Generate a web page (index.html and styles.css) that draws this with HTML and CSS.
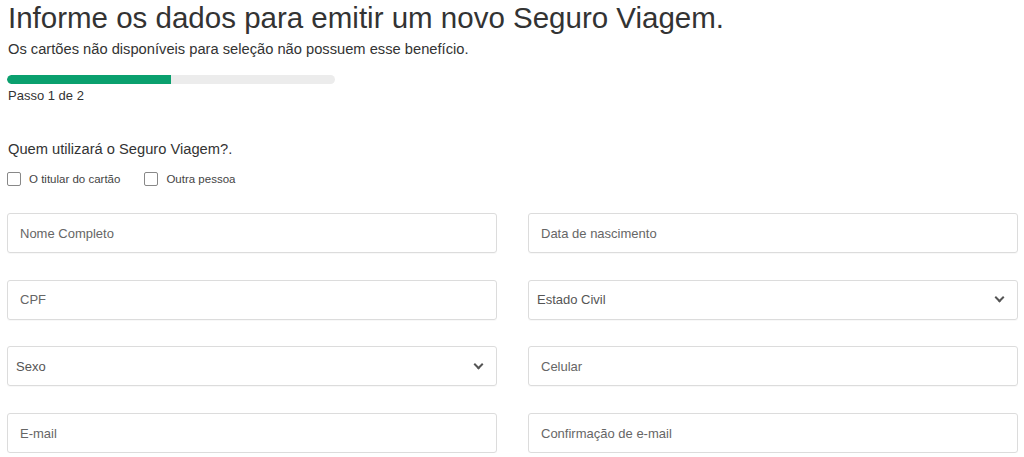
FILE: index.html
```html
<!DOCTYPE html>
<html lang="pt-BR">
<head>
  <meta charset="UTF-8">
  <title>Seguro Viagem</title>
  <link rel="stylesheet" href="styles.css">
</head>
<body>
  <div class="page">
    <h1>Informe os dados para emitir um novo Seguro Viagem.</h1>
    <p class="subtitle">Os cartões não disponíveis para seleção não possuem esse benefício.</p>

    <!-- Progress -->
    <div class="progress"><div class="progress-fill" style="width: 50%"></div></div>
    <div class="step">Passo 1 de 2</div>

    <!-- Who uses it -->
    <p class="question">Quem utilizará o Seguro Viagem?.</p>
    <div class="choices">
      <label class="choice"><span class="box"></span>O titular do cartão</label>
      <label class="choice"><span class="box"></span>Outra pessoa</label>
    </div>

    <!-- Form fields -->
    <div class="form-grid">
      <div class="field">Nome Completo</div>
      <div class="field">Data de nascimento</div>
      <div class="field">CPF</div>
      <div class="field select">Estado Civil <span class="chevron"></span></div>
      <div class="field select">Sexo <span class="chevron"></span></div>
      <div class="field">Celular</div>
      <div class="field">E-mail</div>
      <div class="field">Confirmação de e-mail</div>
    </div>
  </div>
</body>
</html>
```

FILE: styles.css
```css
/* Basic page styling */
body {
  margin: 0;
  background: #fff;
  color: #333;
  font-family: "Liberation Sans", Arial, sans-serif;
}
.page {
  padding: 2px 6px 0 7px;
}
h1 {
  margin: 0 0 0 1px;
  font-size: 29.5px;
  font-weight: normal;
  line-height: 32px;
  color: #333;
}
.subtitle {
  margin: 5px 0 0 1px;
  font-size: 14.7px;
  line-height: 20px;
}
/* Progress bar */
.progress {
  margin-top: 16px;
  width: 328px;
  height: 9px;
  border-radius: 5px;
  background: #ececec;
  overflow: hidden;
}
.progress-fill {
  height: 100%;
  background: #0aa06e;
  border-radius: 5px 0 0 5px;
}
.step {
  margin: 3px 0 0 1px;
  font-size: 13px;
  line-height: 18px;
}
.question {
  margin: 34px 0 0 1px;
  font-size: 14.7px;
  line-height: 20px;
}
/* Checkboxes */
.choices {
  display: flex;
  gap: 24px;
  margin-top: 13px;
}
.choice {
  display: flex;
  align-items: center;
  gap: 8px;
  font-size: 11.5px;
  color: #444;
  line-height: 14px;
}
.box {
  width: 12px;
  height: 12px;
  border: 1px solid #888;
  border-radius: 2px;
  background: #fff;
}
/* Form grid */
.form-grid {
  display: grid;
  grid-template-columns: 1fr 1fr;
  column-gap: 31px;
  row-gap: 26.7px;
  margin-top: 27px;
}
.field {
  display: flex;
  align-items: center;
  height: 40px;
  box-sizing: border-box;
  padding: 0 12px;
  border: 1px solid #dcdcdc;
  border-radius: 3px;
  font-size: 13px;
  color: #666;
  box-shadow: 0 1px 1px rgba(0, 0, 0, 0.03);
}
.field.select {
  justify-content: space-between;
  padding: 0 14px 0 8px;
  color: #555;
}
.chevron {
  width: 5px;
  height: 5px;
  border-right: 2px solid #555;
  border-bottom: 2px solid #555;
  transform: translateY(-2px) rotate(45deg);
}
```
